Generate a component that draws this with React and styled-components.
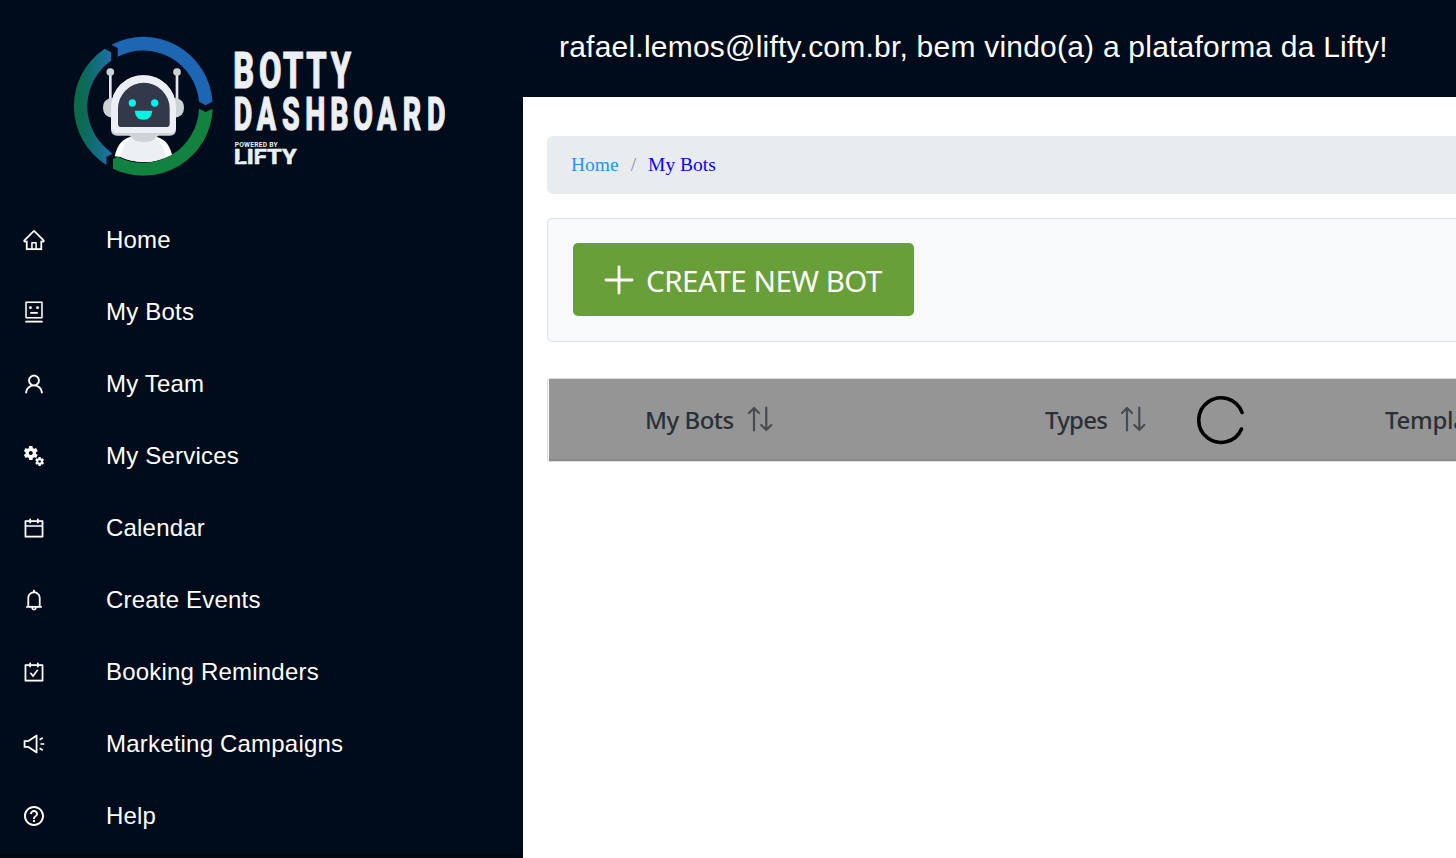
import React from "react";
import styled, { createGlobalStyle } from "styled-components";
import {
  AiOutlineHome,
  AiOutlineRobot,
  AiOutlineUser,
  AiOutlineCalendar,
  AiOutlineBell,
  AiOutlineCarryOut,
  AiOutlineSound,
} from "react-icons/ai";
import { MdHelpOutline, MdMiscellaneousServices } from "react-icons/md";

const GlobalStyle = createGlobalStyle`
  *, *::before, *::after { box-sizing: border-box; }
  html, body { margin: 0; overflow: hidden; background: #fff; }
`;

const Page = styled.div`
  display: flex;
  width: 100vw;
  height: 100vh;
  overflow: hidden;
  font-family: "Liberation Sans", Arial, sans-serif;
`;

const Sidebar = styled.aside`
  display: flex;
  flex-direction: column;
  flex: 0 0 523px;
  height: 100%;
  background: #000b1c;
  overflow: hidden;
`;

const Brand = styled.div`
  flex: 0 0 204px;
  padding: 28px 0 0 64px;
`;

const Menu = styled.ul`
  flex: 0 0 650px;
  margin: 0;
  padding: 0;
  list-style: none;
`;

const MenuItem = styled.li`
  display: flex;
  align-items: center;
  height: 72px;
  padding-left: 22px;
  color: #fff;
  font-size: 24px;
  line-height: 28px;

  svg {
    flex: none;
    width: 24px;
    height: 24px;
    margin-right: 60px;
    stroke-width: ${(p) => p.$iconStroke};
  }
`;

const MenuLabel = styled.span`
  letter-spacing: 0.2px;
  white-space: nowrap;
`;

const SidebarFooter = styled.div`
  flex: 1;
  background: #000814;
`;

const Main = styled.main`
  display: flex;
  flex-direction: column;
  flex: 1;
  min-width: 0;
  overflow: hidden;
`;

const TopBar = styled.header`
  flex: 0 0 97px;
  padding: 29px 0 0 36px;
  background: #000b1c;
  color: #fff;
  font-size: 30px;
  line-height: 35px;
  white-space: nowrap;
`;

const Greeting = styled.span`
  letter-spacing: 0.22px;
`;

const Content = styled.div`
  display: flex;
  flex-direction: column;
  padding: 39px 0 0 24px;
`;

const Breadcrumb = styled.nav`
  display: flex;
  align-items: center;
  height: 58px;
  padding-left: 24px;
  border-radius: 6px 0 0 6px;
  background: #e8ecef;
  font-family: "Liberation Serif", "Times New Roman", serif;
  font-size: 19.5px;
`;

const Crumb = styled.span`
  color: ${(p) => (p.$current ? "#0a00f0" : "#2196f3")};
`;

const Separator = styled.span`
  margin: 0 12px;
  color: #868e96;
`;

const Toolbar = styled.section`
  height: 124px;
  margin-top: 24px;
  padding: 24px 25px;
  border: 1px solid #dee2e6;
  border-right: 0;
  border-radius: 5px 0 0 5px;
  background: #f8f9fb;
`;

const CreateButton = styled.button`
  display: flex;
  align-items: center;
  width: 341px;
  height: 73px;
  padding: 0 0 0 31px;
  border: 0;
  border-radius: 5px;
  background: #689f38;
  color: #fff;
  font-family: "Noto Sans", "Open Sans", sans-serif;
  font-size: 29.5px;
  line-height: 40px;
  white-space: nowrap;

  svg {
    flex: none;
    margin: 2px 11px 0 0;
  }
`;

const ButtonLabel = styled.span`
  letter-spacing: -0.45px;
  padding-top: 3px;
`;

const Table = styled.section`
  position: relative;
  height: 84px;
  margin-top: 36px;
  border: 1px solid #dcdcdc;
  border-right: 0;
  border-radius: 4px 0 0 4px;
  padding-left: 1px;
`;

const HeaderRow = styled.div`
  display: flex;
  align-items: center;
  height: 82px;
  padding: 1px 0 0 96px;
  border-bottom: 2px solid #8c8c8d;
  background: #959595;
  color: #2b3036;
  font-family: "Noto Sans", "Open Sans", sans-serif;
  font-size: 24px;
  font-weight: 500;
`;

const Column = styled.div`
  display: flex;
  align-items: center;
  flex: 0 0 ${(p) => p.$width}px;
  white-space: nowrap;

  svg {
    flex: none;
    margin: 0 0 2px 13px;
  }
`;

const ColumnTitle = styled.span`
  flex: 0 0 ${(p) => p.$width}px;
  letter-spacing: ${(p) => p.$tracking}px;
`;

const Spinner = styled.svg`
  position: absolute;
  left: 648px;
  top: 16px;
`;

const arc = (r, deg) => {
  const a = (deg * Math.PI) / 180;
  return `${(238 + r * Math.cos(a)).toFixed(1)} ${(235 + r * Math.sin(a)).toFixed(1)}`;
};

function Logo() {
  return (
    <svg width="400" height="160" viewBox="0 0 1200 480">
      <defs>
        <linearGradient id="teal" x1="30" y1="0" x2="142" y2="0" gradientUnits="userSpaceOnUse">
          <stop offset="0" stopColor="#0b6b3c" />
          <stop offset="0.35" stopColor="#0c6b60" />
          <stop offset="1" stopColor="#1b72ab" />
        </linearGradient>
      </defs>
      <path
        d={`M142 50 A208 208 0 0 1 ${arc(208, -4)} L425 232 L405 221 A168 168 0 0 0 161 86 V60 Z`}
        fill="#1c66b3"
      />
      <path
        d="M446 242 A208 208 0 0 1 147 422 V393 L161 386 A168 168 0 0 0 405 242 L425 252 Z"
        fill="#11823f"
      />
      <path
        d="M122 62 L141 73 V98 A168 168 0 0 0 130 364 L145 377 L127 387 V411 A208 208 0 0 1 122 62 Z"
        fill="url(#teal)"
      />
      <path d="M152 385 Q164 330 205 326 H272 Q312 330 324 380 Q282 402 238 402 Q198 401 170 387 Z" fill="#fff" />
      <path d="M171 387 Q180 332 212 330 H266 Q294 336 306 386 Q280 402 238 402 Q198 401 171 387 Z" fill="#eceff3" />
      <path d="M190 312 H290 Q275 342 239 342 Q203 342 190 312Z" fill="#d0d3d6" />
      <path d="M135 132 H143 V240 H135Z M335 132 H343 V240 H335Z" fill="#e4e7ea" />
      <circle cx="139" cy="132" r="11.5" fill="#cfd2d5" />
      <circle cx="339" cy="132" r="11.5" fill="#cfd2d5" />
      <path d="M146 209 Q117 212 117 239 Q117 266 146 269Z M331 209 Q360 212 360 239 Q360 266 331 269Z" fill="#cfd2d5" />
      <path d="M141 238 A97 96 0 0 1 336 238 V304 Q336 323 317 323 H160 Q141 323 141 304Z" fill="#d0d3d6" />
      <path d="M141 238 A97 96 0 0 1 336 238 V297 Q336 315 317 315 H160 Q141 315 141 297Z" fill="#eceff3" />
      <path d="M162 242 A77 77 0 0 1 317 242 V287 Q317 297 307 297 H172 Q162 297 162 287Z" fill="#33384b" />
      <circle cx="205" cy="225" r="11" fill="#00f5e4" />
      <circle cx="272" cy="225" r="11" fill="#00f5e4" />
      <path d="M212 248 H265 Q262 275 238 275 Q215 275 212 248Z" fill="#00f5e4" />
      <g fill="#eceff3" stroke="#eceff3" strokeLinejoin="round" fontFamily="Roboto, sans-serif" fontWeight="800">
        <text transform="translate(508 181) scale(0.66 1)" fontSize="148" strokeWidth="3.5" x="0 117 226 331 443">
          BOTTY
        </text>
        <text transform="translate(509 307) scale(0.62 1)" fontSize="138" strokeWidth="3.5" x="0 112 234 346 467 579 693 818 936">
          DASHBOARD
        </text>
        <text x="512" y="356" fontSize="20" strokeWidth="0" textLength="129" lengthAdjust="spacing" fontWeight="700">
          POWERED BY
        </text>
        <text x="510" y="408" fontSize="63" strokeWidth="1.5" textLength="188" lengthAdjust="spacingAndGlyphs">
          LIFTY
        </text>
      </g>
      <path d="M524 400 L548 391 M582 382 L606 374" stroke="#000b1c" strokeWidth="4" />
    </svg>
  );
}

function SortIcon() {
  return (
    <svg width="26" height="26" viewBox="0 0 26 26" fill="none" stroke="#474c51" strokeWidth="2.2" strokeLinecap="round" strokeLinejoin="round">
      <path d="M7 24.5V2M2 7L7 2L12 7M19.3 1.5V24M14.3 19L19.3 24L24.3 19" />
    </svg>
  );
}

const items = [
  [AiOutlineHome, "Home", 4],
  [AiOutlineRobot, "My Bots", 4],
  [AiOutlineUser, "My Team", 4],
  [MdMiscellaneousServices, "My Services", 0],
  [AiOutlineCalendar, "Calendar", 4],
  [AiOutlineBell, "Create Events", 4],
  [AiOutlineCarryOut, "Booking Reminders", 4],
  [AiOutlineSound, "Marketing Campaigns", 4],
  [MdHelpOutline, "Help", 0],
];

const columns = [
  ["My Bots", 400, 89, -0.5],
  ["Types", 340, 62, -0.8],
  ["Templates", 300, 115, -0.3],
];

export default function App() {
  return (
    <Page>
      <GlobalStyle />
      <Sidebar>
        <Brand>
          <Logo />
        </Brand>
        <Menu>
          {items.map(([Icon, label, stroke]) => (
            <MenuItem key={label} $iconStroke={stroke}>
              <Icon />
              <MenuLabel>{label}</MenuLabel>
            </MenuItem>
          ))}
        </Menu>
        <SidebarFooter />
      </Sidebar>
      <Main>
        <TopBar>
          <Greeting>rafael.lemos@lifty.com.br, bem vindo(a) a plataforma da Lifty!</Greeting>
        </TopBar>
        <Content>
          <Breadcrumb>
            <Crumb>Home</Crumb>
            <Separator>/</Separator>
            <Crumb $current>My Bots</Crumb>
          </Breadcrumb>
          <Toolbar>
            <CreateButton>
              <svg width="31" height="31" viewBox="0 0 31 31" stroke="#fff" strokeWidth="2.8" strokeLinecap="round">
                <path d="M15 2V28M2 15H28" />
              </svg>
              <ButtonLabel>CREATE NEW BOT</ButtonLabel>
            </CreateButton>
          </Toolbar>
          <Table>
            <HeaderRow>
              {columns.map(([title, width, titleWidth, tracking]) => (
                <Column key={title} $width={width}>
                  <ColumnTitle $width={titleWidth} $tracking={tracking}>
                    {title}
                  </ColumnTitle>
                  <SortIcon />
                </Column>
              ))}
            </HeaderRow>
            <Spinner width="50" height="50" viewBox="0 0 50 50" fill="none" stroke="#000" strokeWidth="3.6" strokeLinecap="round">
              <path d="M46 17.5A22.3 22.3 0 1 0 45.5 34" />
            </Spinner>
          </Table>
        </Content>
      </Main>
    </Page>
  );
}
